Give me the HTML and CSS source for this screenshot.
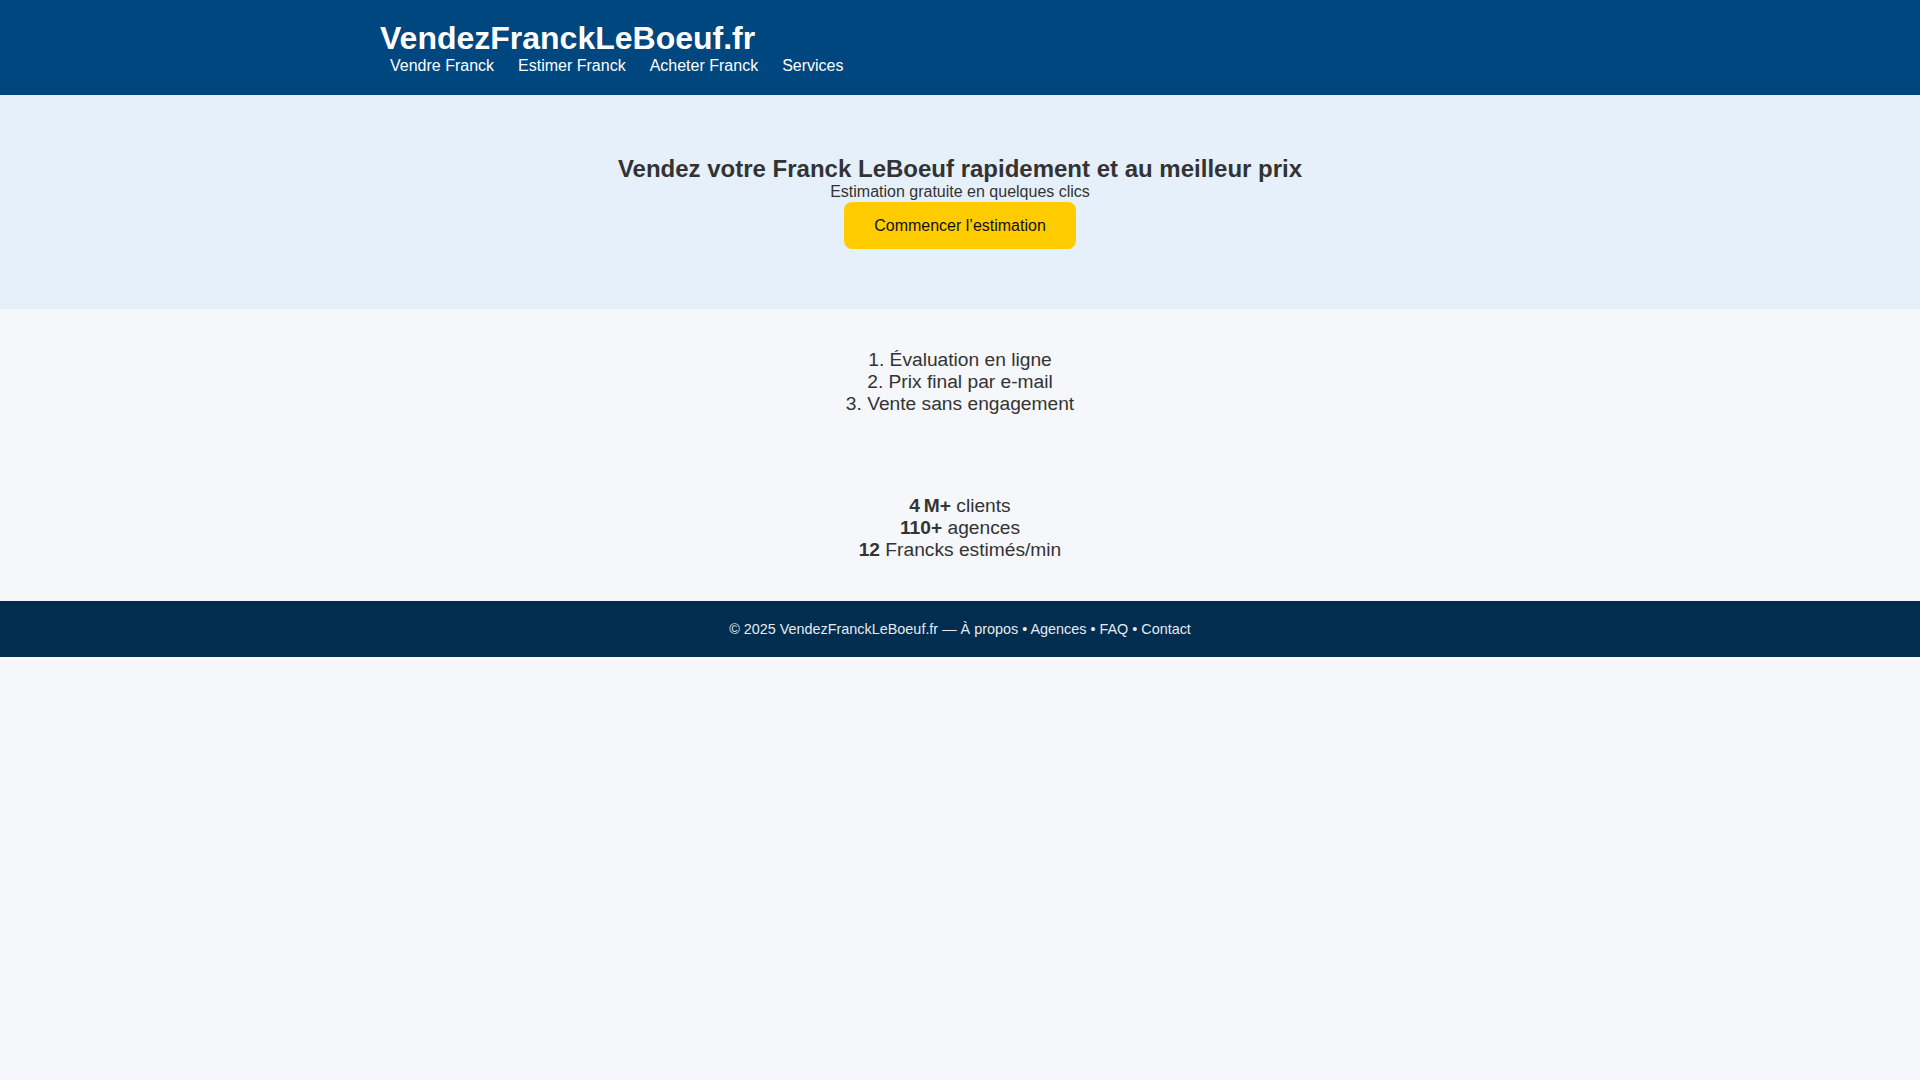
FILE: index.html
```html
<!DOCTYPE html>
<html lang="fr">
<head>
<meta charset="utf-8">
<title>VendezFranckLeBoeuf.fr</title>
<link rel="stylesheet" href="styles.css">
</head>
<body>
<header class="site-header">
  <div class="container">
    <h1 class="logo">VendezFranckLeBoeuf.fr</h1>
    <nav class="nav">
      <a href="#">Vendre Franck</a>
      <a href="#">Estimer Franck</a>
      <a href="#">Acheter Franck</a>
      <a href="#">Services</a>
    </nav>
  </div>
</header>
<section class="hero">
  <h2 class="hero-title">Vendez votre Franck LeBoeuf rapidement et au meilleur prix</h2>
  <p class="hero-sub">Estimation gratuite en quelques clics</p>
  <a class="btn" href="#">Commencer l’estimation</a>
</section>
<section class="steps">
  <ol class="steps-list">
    <li>Évaluation en ligne</li>
    <li>Prix final par e-mail</li>
    <li>Vente sans engagement</li>
  </ol>
</section>
<section class="stats">
  <div><strong>4&#8239;M+</strong> clients</div>
  <div><strong>110+</strong> agences</div>
  <div><strong>12</strong> Francks estimés/min</div>
</section>
<footer class="site-footer">
  © 2025 VendezFranckLeBoeuf.fr — À propos • Agences • FAQ • Contact
</footer>
</body>
</html>
```

FILE: styles.css
```css
* { box-sizing: border-box; }
html, body { margin: 0; padding: 0; }
body {
  font-family: "Liberation Sans", Arial, sans-serif;
  background: #f5f7fb;
  color: #333;
}
.site-header {
  background: #00467f;
  color: #fff;
  padding: 20px 0 20px;
}
.container {
  max-width: 1160px;
  margin: 0 auto;
}
.logo {
  margin: 0;
  font-size: 32px;
  font-weight: bold;
}
.nav {
  display: flex;
  gap: 24px;
  padding-left: 10px;
}
.nav a {
  color: #fff;
  text-decoration: none;
  font-size: 16px;
}
.hero {
  background: #e6f0fa;
  text-align: center;
  padding: 60px 20px;
}
.hero-title {
  margin: 0;
  font-size: 24px;
  font-weight: bold;
  color: #333;
}
.hero-sub {
  margin: 0;
  font-size: 16px;
  color: #333;
}
.btn {
  display: inline-block;
  margin-top: 1px;
  background: #ffcc00;
  color: #111;
  text-decoration: none;
  font-size: 16px;
  padding: 14.6px 30px;
  border-radius: 8px;
}
.steps, .stats {
  padding: 40px 20px;
  text-align: center;
  font-size: 19.2px;
  color: #333;
}
.steps-list {
  margin: 0;
  padding: 0;
  list-style-position: inside;
}
.site-footer {
  background: #002d50;
  color: #e6ebf1;
  text-align: center;
  font-size: 14.4px;
  padding: 20px;
}
```
